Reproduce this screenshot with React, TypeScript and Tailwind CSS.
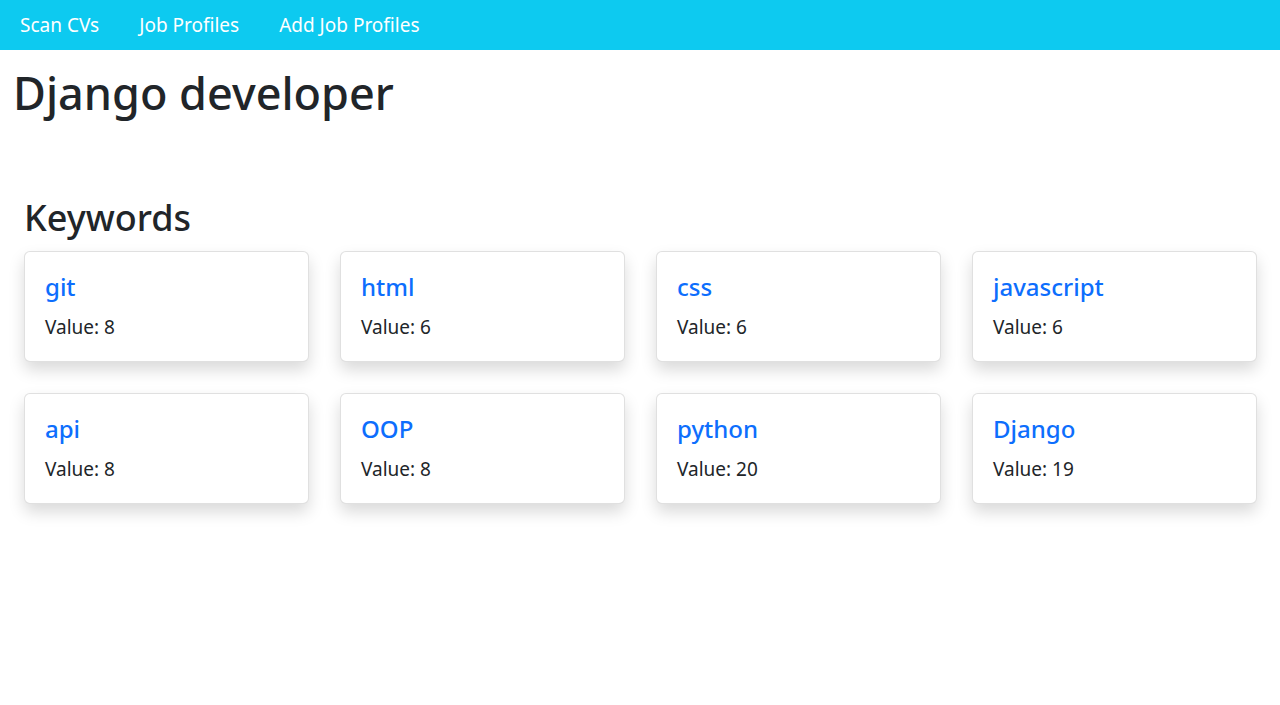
const keywords = [
  { name: 'git', value: 8 },
  { name: 'html', value: 6 },
  { name: 'css', value: 6 },
  { name: 'javascript', value: 6 },
  { name: 'api', value: 8 },
  { name: 'OOP', value: 8 },
  { name: 'python', value: 20 },
  { name: 'Django', value: 19 },
]

const navLinks = ['Scan CVs', 'Job Profiles', 'Add Job Profiles']

export default function App() {
  return (
    <div className="min-h-screen bg-white text-[#212529] font-['Noto_Sans',sans-serif]">
      <nav className="flex h-[50px] items-center bg-[#0dcaf0]">
        {navLinks.map((link) => (
          <a key={link} href="#" className="px-5 text-[19px] leading-[30px] text-white">
            {link}
          </a>
        ))}
      </nav>

      <h1 className="mt-4 px-[13px] text-[45px] leading-[54px] font-medium">Django developer</h1>

      <div className="mt-[76px] pl-6 pr-[23px]">
        <h2 className="mb-3 text-[36px] leading-[43px] font-medium">Keywords</h2>
        <div className="grid grid-cols-4 gap-[31px]">
          {keywords.map((k) => (
            <div
              key={k.name}
              className="rounded-md border border-black/[.12] bg-white px-5 pt-5 pb-[19px] shadow-[0_8px_16px_rgba(0,0,0,0.15)]"
            >
              <h4 className="mb-[11px] text-[24px] leading-[29px] font-medium text-[#0d6efd]">{k.name}</h4>
              <p className="text-[19px] leading-[30px]">Value: {k.value}</p>
            </div>
          ))}
        </div>
      </div>
    </div>
  )
}
